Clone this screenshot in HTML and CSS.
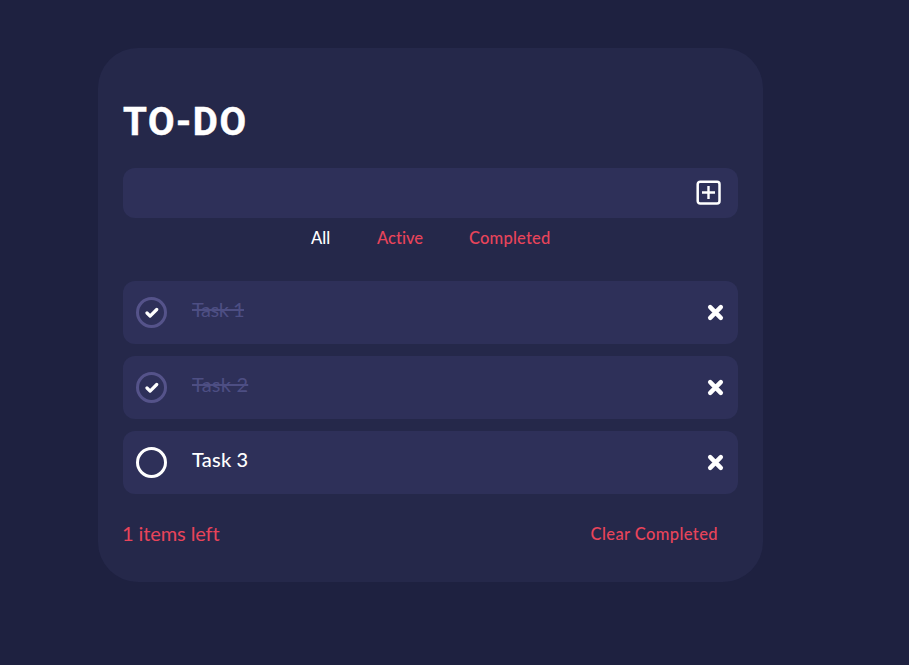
FILE: index.html
```html
<!DOCTYPE html>
<html lang="en">
<head>
<meta charset="utf-8">
<title>To-Do</title>
<link rel="stylesheet" href="styles.css">
</head>
<body>
<svg width="0" height="0" class="defs">
  <symbol id="cross" viewBox="0 0 16 16"><path d="M3 3l10 10M13 3l-10 10" stroke="#fff" stroke-width="4.2" stroke-linecap="round"/></symbol>
  <symbol id="check" viewBox="0 0 14 12"><path d="M2 6l3.1 3.1 6.6-6.6" fill="none" stroke="#fff" stroke-width="3.2" stroke-linecap="round" stroke-linejoin="round"/></symbol>
</svg>
<main class="card">
  <h1 class="title">TO-DO</h1>
  <form class="entry">
    <svg class="add" viewBox="0 0 25 25" fill="none" stroke="#fff"><rect x="1.7" y="1.7" width="21.8" height="21.8" rx="2.5" stroke-width="2.5"/><path d="M12.5 6v13M6 12.5h13" stroke-width="2.4"/></svg>
  </form>
  <nav class="filters">
    <a class="filter all">All</a>
    <a class="filter active">Active</a>
    <a class="filter completed">Completed</a>
  </nav>
  <ul class="tasks">
    <li class="task done"><span class="circle"><svg class="check"><use href="#check"/></svg></span><span class="label one">Task 1</span><svg class="cross"><use href="#cross"/></svg></li>
    <li class="task done"><span class="circle"><svg class="check"><use href="#check"/></svg></span><span class="label">Task 2</span><svg class="cross"><use href="#cross"/></svg></li>
    <li class="task"><span class="circle"></span><span class="label">Task 3</span><svg class="cross"><use href="#cross"/></svg></li>
  </ul>
  <footer class="footer">
    <span class="left">1 items left</span>
    <a class="clear">Clear Completed</a>
  </footer>
</main>
</body>
</html>
```
FILE: styles.css
```css
* { box-sizing: border-box; }
body {
  margin: 0;
  height: 665px;
  padding: 48px 0 0 98px;
  background: #1e2140;
  color: #fff;
  font-family: Lato, sans-serif;
  font-variant-ligatures: none;
}
.defs { display: none; }
.card {
  width: 665px;
  height: 534px;
  padding: 48px 25px 0;
  border-radius: 40px;
  background: #25284a;
}
.title {
  margin: 0;
  height: 72px;
  font: bold 38.5px/51px Roboto, sans-serif;
  letter-spacing: 1.6px;
  -webkit-text-stroke: 0.5px #fff;
}
.entry {
  display: flex;
  align-items: center;
  justify-content: flex-end;
  height: 50px;
  padding: 0 17px 2px 0;
  border-radius: 12px;
  background: #2e3059;
}
.add { width: 25px; height: 25px; }
.filters {
  display: flex;
  height: 63px;
  padding: 9px 0 0 188px;
  font-size: 16.5px;
  font-weight: 500;
  line-height: 22px;
  color: #e8445a;
}
.filter { white-space: nowrap; }
.all { width: 66px; color: #fff; }
.active { width: 92px; }
.completed { letter-spacing: 0.2px; }
.tasks {
  display: grid;
  gap: 12px;
  margin: 0;
  padding: 0;
  list-style: none;
}
.task {
  display: flex;
  align-items: center;
  height: 63px;
  padding: 0 14px 0 13px;
  border-radius: 12px;
  background: #2e3059;
}
.circle {
  display: flex;
  align-items: center;
  justify-content: center;
  width: 31px;
  height: 31px;
  border: 3px solid #fff;
  border-radius: 50%;
}
.done .circle { border-color: #55538a; }
.check { width: 14px; height: 12px; }
.label {
  margin: 0 auto 7px 25px;
  font-size: 20px;
  font-weight: 500;
  line-height: 24px;
  letter-spacing: 0.2px;
}
.done .label { color: #4d4e83; font-weight: 400; text-decoration: line-through; letter-spacing: 0.2px; }
.done .one { letter-spacing: -0.5px; }
.cross { width: 17px; height: 17px; }
.footer {
  display: flex;
  justify-content: space-between;
  padding: 27px 20px 0 0;
  line-height: 24px;
  color: #e8445a;
}
.left { margin-left: -1px; font-size: 20px; letter-spacing: -0.1px; }
.clear { padding-top: 1px; font-size: 16.5px; font-weight: 500; letter-spacing: 0.4px; }
```
